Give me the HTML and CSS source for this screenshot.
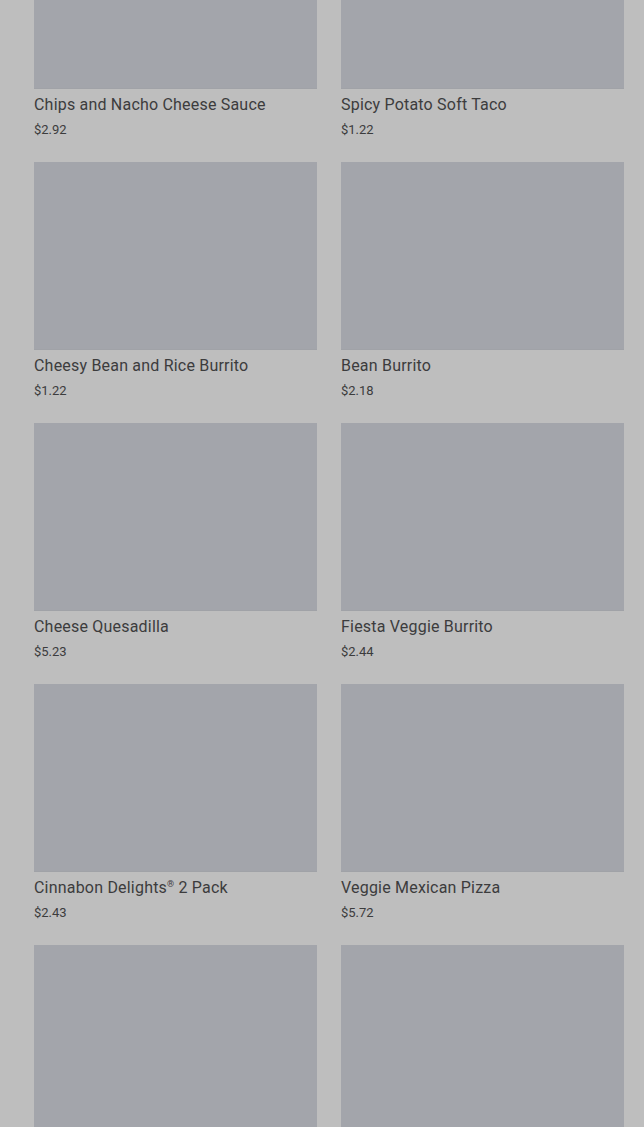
FILE: index.html
```html
<!doctype html>
<html>
<head>
 <title>Menu</title>
 <meta name=viewport content="width=device-width, initial-scale=1">
 <link rel="stylesheet" href="styles.css">
</head>
<body>
<div class=menu>
 <div class=item>
  <div class=pic></div>
  <div class=name>Chips and Nacho Cheese Sauce</div>
  <div class=price>$2.92</div>
 </div>
 <div class=item>
  <div class=pic></div>
  <div class=name>Spicy Potato Soft Taco</div>
  <div class=price>$1.22</div>
 </div>
 <div class=item>
  <div class=pic></div>
  <div class=name>Cheesy Bean and Rice Burrito</div>
  <div class=price>$1.22</div>
 </div>
 <div class=item>
  <div class=pic></div>
  <div class=name>Bean Burrito</div>
  <div class=price>$2.18</div>
 </div>
 <div class=item>
  <div class=pic></div>
  <div class=name>Cheese Quesadilla</div>
  <div class=price>$5.23</div>
 </div>
 <div class=item>
  <div class=pic></div>
  <div class=name>Fiesta Veggie Burrito</div>
  <div class=price>$2.44</div>
 </div>
 <div class=item>
  <div class=pic></div>
  <div class=name>Cinnabon Delights<sup>&reg;</sup> 2 Pack</div>
  <div class=price>$2.43</div>
 </div>
 <div class=item>
  <div class=pic></div>
  <div class=name>Veggie Mexican Pizza</div>
  <div class=price>$5.72</div>
 </div>
 <div class=item>
  <div class=pic></div>
 </div>
 <div class=item>
  <div class=pic></div>
 </div>
</div>
</body>
</html>
```

FILE: styles.css
```css
html, body {margin:0; background:#bebebe; overflow:hidden;}
body {font-family: Roboto, "Liberation Sans", sans-serif; color:#3c3c3d;}
.menu {
  display:grid;
  grid-template-columns: 283px 283px;
  column-gap:24px;
  row-gap:23px;
  padding:0 20px 0 34px;
  margin-top:-99px;
}
.pic {
  height:187px;
  background:#a3a5ab;
  border-bottom:1px solid #a0a2a7;
}
.name {
  margin-top:6px;
  font-size:16px;
  line-height:20px;
  letter-spacing:0.2px;
}
.name sup {font-size:9px; vertical-align:6px; line-height:0;}
.price {
  margin-top:6px;
  font-size:13px;
  line-height:18px;
}
```
